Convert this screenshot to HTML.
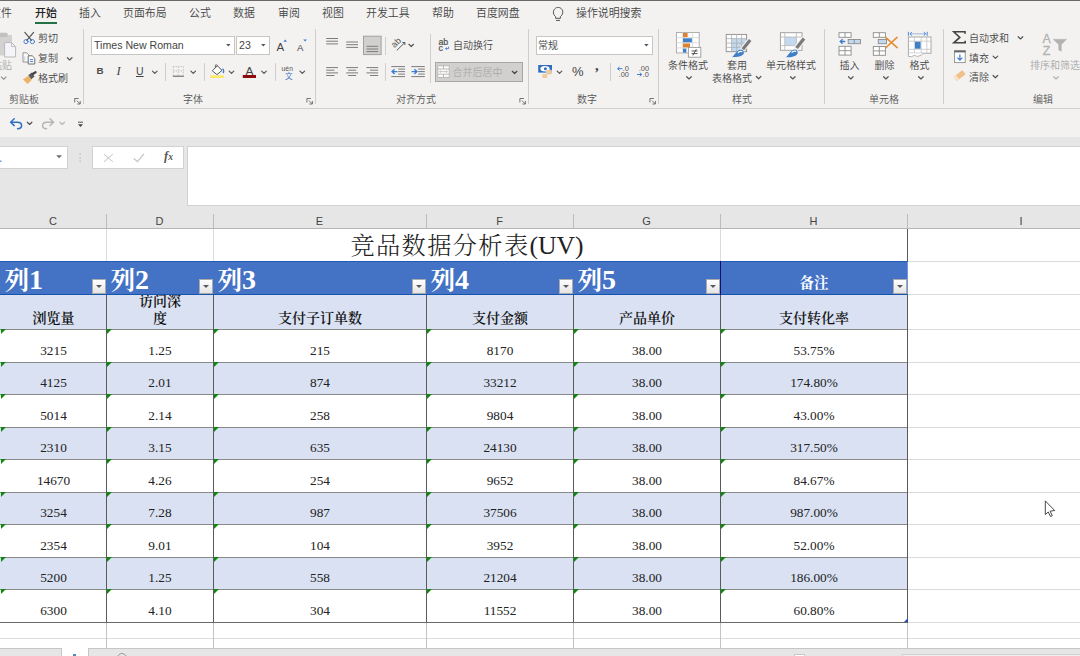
<!DOCTYPE html>
<html lang="zh-CN">
<head>
<meta charset="utf-8">
<title>竞品数据分析表(UV)</title>
<style>
*{box-sizing:border-box;margin:0;padding:0}
html,body{width:1080px;height:656px;overflow:hidden;background:#fff}
body{position:relative;font-family:"Liberation Sans","Noto Sans CJK SC",sans-serif;font-size:11px;color:#3b3b3b;font-weight:350}
.abs{position:absolute}
#topline{position:absolute;left:0;top:0;width:1080px;height:1px;background:#6a6a6a}
#ribbon{position:absolute;left:0;top:1px;width:1080px;height:107px;background:#f3f2f1}
#ribline{position:absolute;left:0;top:108px;width:1080px;height:1px;background:#d2d0ce}
#qat{position:absolute;left:0;top:109px;width:1080px;height:28px;background:#f3f2f1}
#fbar{position:absolute;left:0;top:137px;width:1080px;height:92px;background:#e6e6e6}
.tab{position:absolute;top:4px;height:16px;line-height:16px;font-size:10.9px;color:#444;white-space:nowrap}
.t{position:absolute;white-space:nowrap;font-size:10px;line-height:12px;color:#444}
.vsep{position:absolute;width:1px;background:#d0cecc;top:28px;height:75px}
.vsep.s{top:62px;height:18px}
.t.ctr{transform:translateX(-50%)}
.t.dis{color:#a8a8a8}
.t.dis2{color:#ababab}
.t.lat{font-family:'Liberation Sans',sans-serif}
.glabel{position:absolute;top:92.6px;font-size:10px;line-height:12px;color:#555;white-space:nowrap;transform:translateX(-50%)}
.box{position:absolute;background:#fff;border:1px solid #c8c6c4}
#botbar{position:absolute;left:0;top:648px;width:1080px;height:8px;overflow:hidden}
/* grid */
#colhdr{position:absolute;left:0;top:213px;width:1080px;height:16px;background:#e6e6e6;border-bottom:1px solid #b5b5b5}
.ch{position:absolute;top:214px;height:15px;line-height:15px;font-size:11px;color:#444;text-align:center}
.chs{position:absolute;top:214px;width:1px;height:15px;background:#bcbcbc}
#grid{position:absolute;left:0;top:0;width:1080px;height:656px;font-family:"Liberation Serif","Noto Serif CJK SC",serif}
.row{position:absolute;left:0;width:907px;background:#fff;border-top:1px solid #8a8a8a}
.row.band{background:#d9e1f2}
.c{position:absolute;top:-1px;bottom:0;border-left:1px solid #5a5a5a;text-align:center;font-size:13.3px;color:#222}
.c span{position:absolute;left:0;right:0;bottom:4px;line-height:15px}
.tri{position:absolute;left:0;top:0.4px;width:0;height:0;border-top:5.6px solid #0f870f;border-right:5.6px solid transparent}
.hl{position:absolute;height:1px;background:#dbdbdb}
.vl{position:absolute;width:1px;background:#dbdbdb}
</style>
<style>
#title{position:absolute;left:214px;width:506px;top:229px;height:32px;background:#fff;line-height:33px;text-align:center;font-size:25.6px;color:#222;white-space:nowrap}
#hrow{position:absolute;left:0;top:261px;width:907px;height:34px;background:#4472c4;border-top:1px solid #1f5cb8;border-bottom:1px solid #1553ac}
.hc{position:absolute;top:-1px;height:34px;color:#fff;font-weight:bold;font-size:24.5px;white-space:nowrap}
.hc span b{font-size:28px;font-weight:bold}
.hc span{position:absolute;left:4.5px;bottom:-0.6px;line-height:30px}
.hc.note{border-left:1px solid #10106a}
.hc.note span{left:0;right:0;text-align:center;font-size:14.5px;line-height:16px;bottom:4px}
.fb{position:absolute;right:0px;bottom:1px;width:14px;height:15px;background:linear-gradient(#fff,#e4e4e4);border:1px solid #ababab}
.fb b{position:absolute;left:3px;top:5px;width:0;height:0;border-left:3.5px solid transparent;border-right:3.5px solid transparent;border-top:3.5px solid #5a5a5a}
#srow{position:absolute;left:0;top:295px;width:907px;height:34px;background:#d9e1f2;overflow:hidden}
.sc{position:absolute;top:0;height:34px;border-left:1px solid #5a5a5a;font-weight:600;font-size:14px;color:#111;text-align:center;overflow:hidden}
.sc span{position:absolute;left:0;right:0;bottom:1.6px;line-height:17.2px}
#tblb{position:absolute;left:0;top:622px;width:908px;height:1px;background:#6a6a6a}
#tblr{position:absolute;left:907px;top:229px;width:1px;height:394px;background:#5a5a5a}
.c.f,.sc.f{border-left-color:transparent}
#hdl{position:absolute;left:904px;top:618px;width:0;height:0;border-bottom:4px solid #1f4fb4;border-left:4px solid transparent}
#tblrh{position:absolute;left:907px;top:262px;width:1px;height:32px;background:#6f97dd}
#title span{font-size:24.2px;letter-spacing:1.4px}
</style>
</head>
<body>
<div id="topline"></div>
<div id="ribbon">
<!-- tabs -->
<div class="tab" style="left:-10px">文件</div>
<div class="tab" style="left:35px;color:#222;font-weight:500">开始</div>
<div class="abs" style="left:35px;top:20.5px;width:22px;height:2px;background:#217346"></div>
<div class="tab" style="left:79px">插入</div>
<div class="tab" style="left:123px">页面布局</div>
<div class="tab" style="left:189px">公式</div>
<div class="tab" style="left:233px">数据</div>
<div class="tab" style="left:278px">审阅</div>
<div class="tab" style="left:322px">视图</div>
<div class="tab" style="left:366px">开发工具</div>
<div class="tab" style="left:432px">帮助</div>
<div class="tab" style="left:476px">百度网盘</div>
<div class="tab" style="left:576px">操作说明搜索</div>
<!-- group separators -->
<div class="vsep" style="left:83px"></div>
<div class="vsep" style="left:315px"></div>
<div class="vsep" style="left:528px"></div>
<div class="vsep" style="left:658px"></div>
<div class="vsep" style="left:824px"></div>
<div class="vsep" style="left:943px"></div>
<div class="vsep" style="left:430px;top:33px;height:49px"></div>
<!-- small separators -->
<div class="vsep s" style="left:165px"></div>
<div class="vsep s" style="left:204px"></div>
<div class="vsep s" style="left:275px"></div>
<div class="vsep s" style="left:385px"></div>
<div class="vsep s" style="left:385px;top:36px"></div>
<div class="vsep s" style="left:610px"></div>
<!-- group labels -->
<div class="glabel" style="left:24px">剪贴板</div>
<div class="glabel" style="left:193px">字体</div>
<div class="glabel" style="left:416px">对齐方式</div>
<div class="glabel" style="left:587px">数字</div>
<div class="glabel" style="left:742px">样式</div>
<div class="glabel" style="left:884px">单元格</div>
<div class="glabel" style="left:1043px">编辑</div>
<!-- clipboard texts -->
<div class="t dis" style="left:-8px;top:59.4px">粘贴</div>
<div class="t" style="left:38px;top:32px">剪切</div>
<div class="t" style="left:38px;top:52px">复制</div>
<div class="t" style="left:38px;top:72px">格式刷</div>
<!-- font group -->
<div class="box" style="left:91px;top:35px;width:144px;height:19px"></div>
<div class="t lat" style="left:94px;top:38px;font-size:10.6px">Times New Roman</div>
<div class="box" style="left:236px;top:35px;width:34px;height:19px"></div>
<div class="t lat" style="left:239px;top:38px;font-size:10.6px">23</div>
<div class="t lat" style="left:96.5px;top:64.4px;font-weight:bold;font-size:9.8px;color:#4a4a4a">B</div>
<div class="t" style="left:116.5px;top:63.6px;font-style:italic;font-size:12.5px;font-weight:400;font-family:'Liberation Serif',serif">I</div>
<div class="t lat" style="left:136px;top:64px;font-size:10.5px;text-decoration:underline">U</div>
<div class="t lat" style="left:276.4px;top:39.6px;font-size:11.5px">A</div>
<div class="t lat" style="left:297px;top:40.7px;font-size:9.6px">A</div>
<div class="t lat" style="left:245.4px;top:64.2px;font-size:11.8px">A</div>
<div class="t" style="left:285px;top:69.5px;font-size:7.6px;color:#2f6fc2">文</div>
<!-- alignment -->
<div class="t" style="left:453px;top:39px">自动换行</div>
<div class="box" style="left:435px;top:61px;width:88px;height:20px;background:#d2d0ce;border-color:#a8a6a4"></div>
<div class="t dis2" style="left:452.5px;top:65.5px">合并后居中</div>
<!-- number -->
<div class="box" style="left:536px;top:35px;width:117px;height:19px"></div>
<div class="t" style="left:538px;top:39px">常规</div>
<div class="t lat" style="left:572px;top:65px;font-size:13px">%</div>
<div class="t" style="left:595px;top:58px;font-size:15px;font-weight:bold;font-family:'Liberation Serif',serif">,</div>
<!-- styles -->
<div class="t ctr" style="left:688px;top:59px">条件格式</div>
<div class="t ctr" style="left:737px;top:59px">套用</div>
<div class="t ctr" style="left:732px;top:72px">表格格式</div>
<div class="t ctr" style="left:791px;top:59px">单元格样式</div>
<!-- cells -->
<div class="t ctr" style="left:849.5px;top:59px">插入</div>
<div class="t ctr" style="left:884.5px;top:59px">删除</div>
<div class="t ctr" style="left:919.5px;top:59px">格式</div>
<!-- editing -->
<div class="t" style="left:969px;top:31.8px">自动求和</div>
<div class="t" style="left:969px;top:51.5px">填充</div>
<div class="t" style="left:969px;top:70.6px">清除</div>
<div class="t dis" style="left:1030px;top:59px">排序和筛选</div>
</div>
<div id="ribline"></div>
<div id="qat"></div>
<div id="fbar">
<div class="box nb" style="left:-1px;top:9px;width:69px;height:23px;border-color:#d2d2d2"></div>
<div class="box nb" style="left:92px;top:9px;width:92px;height:23px;border-color:#d2d2d2"></div>
<div class="box nb" style="left:187px;top:9px;width:900px;height:60px;border-color:#d2d2d2"></div>
<div class="t" style="left:164px;top:13px;font-family:'Liberation Serif',serif;font-style:italic;font-weight:bold;font-size:12.5px;color:#555"><i>f</i><span style="font-size:9.5px">x</span></div>
</div>
<svg id="ico" class="abs" style="left:0;top:0" width="1080" height="212" viewBox="0 0 1080 212" font-family="'Liberation Sans',sans-serif">
<defs>
<path id="chv" d="M-2.3 -1.1 L0 1.15 L2.3 -1.1" fill="none" stroke-width="1.2" stroke-linecap="round" stroke-linejoin="round"/>
<path id="dl" d="M0 0.5 H-0.1 M0.5 0.5 H4.5 M0.5 0.5 V4.5 M2.6 2.6 L6 6 M6 3 V6 H3" fill="none" stroke="#666" stroke-width="0.9"/>
<path id="dd" d="M-2.2 -1.1 H2.2 L0 1.3 Z"/>
</defs>
<!-- lightbulb -->
<g fill="none" stroke="#555" stroke-width="1">
<path d="M555.6 16.6 C553.2 14.8 552.6 11.2 554.6 9 C556.6 6.8 560 6.9 561.8 9.2 C563.6 11.6 562.8 14.8 560.4 16.6 V18.3 H555.6 Z"/>
<path d="M556 20.4 H560"/>
</g>
<!-- paste (disabled) -->
<rect x="-2" y="35" width="14" height="20.5" fill="#d3d2d1"/>
<rect x="-1" y="32.8" width="8.6" height="4.2" rx="1" fill="#c2c1c0"/>
<path d="M4.6 42.6 H11.6 L15.6 46.6 V57 H4.6 Z" fill="#f4f4f9" stroke="#b9b9bd" stroke-width="1"/>
<path d="M11.6 42.6 V46.6 H15.6" fill="none" stroke="#b9b9bd" stroke-width="0.9"/>
<use href="#chv" x="3.7" y="78.1" stroke="#9a9a9a"/>
<!-- scissors -->
<g fill="none" stroke-linecap="round">
<path d="M24.8 32.4 L31.6 40.4 M33.6 32.4 L26.8 40.4" stroke="#555" stroke-width="1.2"/>
<circle cx="26" cy="41.6" r="2.1" stroke="#3b7bd2" stroke-width="0.9"/>
<circle cx="32.4" cy="41.6" r="2.1" stroke="#3b7bd2" stroke-width="0.9"/>
</g>
<!-- copy -->
<path d="M23 52.8 H26.6 L29.2 55.4 V62 H23 Z" fill="#fbfbfb" stroke="#8a8a8a" stroke-width="0.9"/>
<path d="M24.8 56.5 V60.5" stroke="#a8c4e8" stroke-width="0.8"/>
<path d="M28.2 55.8 H32.2 L34.8 58.4 V64 H28.2 Z" fill="#fff" stroke="#6e6e6e" stroke-width="1"/>
<path d="M29.8 59.6 H33.2 M29.8 61.6 H33.2" stroke="#3b7bd2" stroke-width="0.9"/>
<use href="#chv" x="69.7" y="58.8" stroke="#555"/>
<!-- format painter -->
<path d="M22.9 79.6 L28.6 75.4 L31.8 79.9 L27.6 83.9 Z" fill="#eab56b"/>
<path d="M28.4 75 L31.9 72.6 L34.6 76.5 L31.2 79.2 Z" fill="#5a5a5a"/>
<path d="M32.6 74 L35.6 72.2" stroke="#444" stroke-width="2.2" stroke-linecap="round"/>
<!-- dialog launchers -->
<use href="#dl" x="74.2" y="98"/>
<use href="#dl" x="306.4" y="98"/>
<use href="#dl" x="519.4" y="98"/>
<use href="#dl" x="649.4" y="98"/>
<!-- font box arrows -->
<use href="#dd" x="228.3" y="45.2" fill="#555"/>
<use href="#dd" x="263.3" y="45.2" fill="#555"/>
<use href="#dd" x="646.4" y="45.2" fill="#555"/>
<!-- grow/shrink font triangles -->
<path d="M283.4 41.8 L285.2 39.6 L287 41.8 Z" fill="#3b7bd2"/>
<path d="M303.2 39.4 H307 L305.1 41.6 Z" fill="#3b7bd2"/>
<!-- U chevron, border icon -->
<use href="#chv" x="154.8" y="72.2" stroke="#555"/>
<g stroke="#c2c2c2" stroke-width="1" stroke-dasharray="1.4 1.2" fill="none">
<path d="M173 66.5 H183.6 M173 71 H183.6 M173.3 66.5 V75.6 M178.3 66.5 V75.6 M183.3 66.5 V75.6"/>
</g>
<path d="M172.8 76.2 H183.8" stroke="#666" stroke-width="1.1"/>
<use href="#chv" x="193.2" y="72.2" stroke="#555"/>
<!-- fill bucket -->
<path d="M212.3 70.8 L217.4 65.8 L222 70.4 L216.9 74.6 Z" fill="#fff" stroke="#555" stroke-width="1" stroke-linejoin="round"/>
<path d="M215.4 67.6 V65.4 Q215.4 64.6 216.4 64.8 L218 66.2" fill="none" stroke="#555" stroke-width="0.9"/>
<path d="M222.6 68.6 Q224.6 71 223 73" fill="none" stroke="#3b7bd2" stroke-width="1.3"/>
<rect x="210.2" y="75.4" width="13.8" height="2.6" fill="#fbe869"/>
<use href="#chv" x="231.5" y="72.2" stroke="#555"/>
<!-- font color -->
<rect x="242.8" y="75" width="13.2" height="3" fill="#8f0a0a"/>
<use href="#chv" x="264" y="72.2" stroke="#555"/>
<!-- wen -->
<text x="281.6" y="70.8" font-size="6.8" fill="#555">uén</text>
<use href="#chv" x="302.3" y="72.2" stroke="#555"/>
<!-- alignment row 1 -->
<g stroke="#7c7c7c" stroke-width="1">
<path d="M326.2 38.5 H338 M326.2 41.2 H338 M326.2 43.9 H338"/>
<path d="M346.2 42 H358 M346.2 44.7 H358 M346.2 47.4 H358"/>
</g>
<rect x="363.5" y="36.2" width="17.6" height="18.4" fill="#d2d0ce" stroke="#a3a19f" stroke-width="1"/>
<path d="M366.5 46.3 H378.2 M366.5 49 H378.2 M366.5 51.6 H378.2" stroke="#7c7c7c" stroke-width="1"/>
<!-- orientation -->
<g transform="translate(394.6,48.2) rotate(-45)"><text x="0" y="0" font-size="9" fill="#555">ab</text></g>
<path d="M396.8 50.4 L404.8 42.6 M402.4 42.5 H404.9 V45" fill="none" stroke="#555" stroke-width="1"/>
<use href="#chv" x="411.2" y="45.4" stroke="#555"/>
<!-- wrap text icon -->
<text x="438.4" y="44.7" font-size="8.8" fill="#505050" stroke="#505050" stroke-width="0.2">ab</text>
<text x="438.4" y="50.8" font-size="8.8" fill="#505050" stroke="#505050" stroke-width="0.2">c</text>
<path d="M448.6 46.6 V48.6 H445.6 M446.8 47.4 L445.5 48.6 L446.8 49.8" fill="none" stroke="#3b7bd2" stroke-width="0.9"/>
<!-- alignment row 2 -->
<g stroke="#7c7c7c" stroke-width="1">
<path d="M326.2 67.6 H338 M326.2 70.2 H334.4 M326.2 72.9 H338 M326.2 75.5 H334.4"/>
<path d="M346.2 67.6 H358 M348.1 70.2 H356.2 M346.2 72.9 H358 M348.1 75.5 H356.2"/>
<path d="M366.4 67.6 H378.2 M370 70.2 H378.2 M366.4 72.9 H378.2 M370 75.5 H378.2"/>
<path d="M391.3 66.6 H405 M391.3 76.6 H405 M398.2 69.1 H405 M398.2 71.6 H405 M398.2 74.1 H405"/>
<path d="M411.3 66.6 H424.8 M411.3 76.6 H424.8 M418.2 69.1 H424.8 M418.2 71.6 H424.8 M418.2 74.1 H424.8"/>
</g>
<path d="M392 71.6 H397.4 M394.6 69.2 L392 71.6 L394.6 74" fill="none" stroke="#3b7bd2" stroke-width="1.3"/>
<path d="M411.6 71.6 H417 M414.4 69.2 L417 71.6 L414.4 74" fill="none" stroke="#3b7bd2" stroke-width="1.3"/>
<!-- merge icon -->
<g fill="#fcfcfc" stroke="#b4b4b4" stroke-width="0.9">
<rect x="437.8" y="65.8" width="11.4" height="11.6"/>
<path d="M437.8 69 H449.2 M437.8 74.2 H449.2 M443.5 65.8 V69 M443.5 74.2 V77.4" fill="none"/>
<path d="M439.6 71.6 H447.4 M440.8 70.5 L439.6 71.6 L440.8 72.7 M446.2 70.5 L447.4 71.6 L446.2 72.7" fill="none" stroke="#c0c0c0"/>
</g>
<use href="#chv" x="514.6" y="72.4" stroke="#444"/>
<!-- currency -->
<rect x="538.2" y="65" width="13.8" height="7.6" fill="#2f6fc2"/>
<ellipse cx="545" cy="68.8" rx="4.6" ry="2.7" fill="#fff"/>
<circle cx="545.4" cy="68.8" r="1.5" fill="#2f6fc2"/>
<g fill="#ecbd80" stroke="#f3f2f1" stroke-width="0.5">
<rect x="546.2" y="70" width="5.4" height="2.2" rx="1"/>
<rect x="546.2" y="72.2" width="5.4" height="2.2" rx="1"/>
<rect x="542" y="74" width="5.6" height="2.1" rx="1"/>
<rect x="542" y="76" width="5.6" height="2.1" rx="1"/>
</g>
<use href="#chv" x="559.5" y="72.2" stroke="#555"/>
<!-- decimals -->
<g font-size="7.4" fill="#555">
<text x="622.6" y="70.8">.0</text>
<text x="618.6" y="76.9">.00</text>
<text x="638.8" y="70.8">.00</text>
<text x="642.6" y="76.9">.0</text>
</g>
<path d="M617.6 68.7 H622.4 M619.6 66.9 L617.6 68.7 L619.6 70.5" fill="none" stroke="#3b7bd2" stroke-width="1"/>
<path d="M637 74.5 H641.8 M639.8 72.7 L641.8 74.5 L639.8 76.3" fill="none" stroke="#3b7bd2" stroke-width="1"/>
<!-- conditional formatting -->
<rect x="676.4" y="32.5" width="22.8" height="20.4" fill="#fff" stroke="#a6a6a6" stroke-width="0.9"/>
<path d="M682.8 32.5 V52.9 M692.6 32.5 V52.9 M676.4 37.6 H699.2 M676.4 42.8 H699.2 M676.4 47.9 H699.2" stroke="#d4d4d4" stroke-width="0.8" fill="none"/>
<rect x="683" y="33" width="4.6" height="4.1" fill="#e0812d"/>
<rect x="683" y="38.3" width="8.9" height="4" fill="#3f7fc8"/>
<rect x="683" y="43.5" width="7" height="3.9" fill="#e0812d"/>
<rect x="683" y="48.6" width="3.4" height="4" fill="#3f7fc8"/>
<rect x="688.4" y="47.4" width="12.4" height="9.8" fill="#fff" stroke="#9a9a9a" stroke-width="0.9"/>
<path d="M691.6 51 H697.6 M691.6 53.6 H697.6 M696.4 49.2 L692.8 55.4" stroke="#444" stroke-width="0.9" fill="none"/>
<use href="#chv" x="689" y="77.8" stroke="#555"/>
<!-- format as table -->
<rect x="726.2" y="34.4" width="20.4" height="17.3" fill="#fdfdfd"/>
<rect x="731.6" y="38.6" width="15" height="13" fill="#c3d9ef"/>
<rect x="726.2" y="34.4" width="20.4" height="17.3" fill="none" stroke="#8c8c8c" stroke-width="0.9"/>
<path d="M731.6 34.4 V51.7 M736.6 34.4 V51.7 M741.6 34.4 V51.7 M726.2 38.6 H746.6 M726.2 43.1 H746.6 M726.2 47.4 H746.6" stroke="#b0b0b0" stroke-width="0.8" fill="none"/>
<path d="M750.6 39.4 L741.6 50.6" stroke="#f3f2f1" stroke-width="5.4"/>
<path d="M750.2 40 L742.8 49.2" stroke="#7a7a7a" stroke-width="3.2" stroke-linecap="butt"/>
<path d="M732.2 57.2 C735 54.4 736.6 50.8 740.6 49.6 C743 49.6 744.4 51.4 743.8 53.6 C742.4 56.6 737.4 57.2 732.2 57.2 Z" fill="#3f7fc8"/>
<path d="M738.2 52.6 Q740 50.8 741.8 51.6" stroke="#fff" stroke-width="1.2" fill="none" stroke-linecap="round"/>
<use href="#chv" x="758.6" y="77.6" stroke="#555"/>
<!-- cell styles -->
<rect x="780.4" y="32.7" width="21.6" height="17.6" fill="#fdfdfd"/>
<rect x="784.8" y="37" width="11.6" height="8.6" fill="#c3d9ef"/>
<rect x="780.4" y="32.7" width="21.6" height="17.6" fill="none" stroke="#9a9a9a" stroke-width="0.9"/>
<path d="M784.8 32.7 V50.3 M796.4 32.7 V50.3 M780.4 37 H802 M780.4 45.6 H802" stroke="#b8b8b8" stroke-width="0.8" fill="none"/>
<path d="M804.4 38 L795.4 49.4" stroke="#f3f2f1" stroke-width="5.4"/>
<path d="M804 38.6 L796.6 48" stroke="#7a7a7a" stroke-width="3.2"/>
<path d="M786 57.2 C788.8 54.4 790.4 50.6 794.4 49.4 C796.8 49.4 798.2 51.2 797.6 53.4 C796.2 56.6 791.2 57.2 786 57.2 Z" fill="#3f7fc8"/>
<path d="M792 52.4 Q793.8 50.6 795.6 51.4" stroke="#fff" stroke-width="1.2" fill="none" stroke-linecap="round"/>
<use href="#chv" x="792.8" y="77.8" stroke="#555"/>
<!-- insert -->
<g fill="#fff" stroke="#8c8c8c" stroke-width="0.9">
<rect x="839" y="32.7" width="12.1" height="4.6"/><path d="M845 32.7 V37.3"/>
<rect x="839" y="46.3" width="12.1" height="8.8"/><path d="M845 46.3 V55.1 M839 50.7 H851.1"/>
<rect x="848.2" y="39.5" width="12.3" height="4.2" fill="#c3d9ef"/><path d="M854.3 39.5 V43.7"/>
</g>
<path d="M840.2 41.5 H845.2 M842.6 39.2 L840.2 41.5 L842.6 43.8" fill="none" stroke="#3b7bd2" stroke-width="1.3"/>
<use href="#chv" x="850.8" y="77.8" stroke="#555"/>
<!-- delete -->
<g fill="#fff" stroke="#8c8c8c" stroke-width="0.9">
<rect x="873.3" y="32.7" width="12.1" height="4.6"/><path d="M879.3 32.7 V37.3"/>
<rect x="873.3" y="46.5" width="12.1" height="8.8"/><path d="M879.3 46.5 V55.3 M873.3 50.9 H885.4"/>
<rect x="878.3" y="39.5" width="8.2" height="4.2" fill="#c3d9ef"/>
</g>
<path d="M885.6 37.4 L897.2 47.6 M897 37.4 L885.8 47.8" stroke="#e08c2e" stroke-width="1.5" fill="none" stroke-linecap="round"/>
<use href="#chv" x="885.9" y="77.8" stroke="#555"/>
<!-- format -->
<rect x="908.4" y="37" width="22.6" height="16.2" fill="#fff" stroke="#a0a0a0" stroke-width="0.9"/>
<path d="M914.4 37 V53.2 M921.2 37 V53.2 M926.8 37 V53.2 M908.4 41.2 H931 M908.4 49.3 H931" stroke="#c4c4c4" stroke-width="0.8" fill="none"/>
<rect x="915" y="41.7" width="5.6" height="7" fill="#3f7fc8"/>
<path d="M908.4 53.2 V56.4 Q911.5 57.4 914.4 55.4 Q917.5 57.6 921.2 55.2 L923.4 53.2" fill="#fff" stroke="#a0a0a0" stroke-width="0.8"/>
<path d="M908.4 31.8 V35.8 M927.2 31.8 V35.8" stroke="#3b7bd2" stroke-width="0.9"/>
<path d="M910 33.8 H925.6" stroke="#9ab4d8" stroke-width="0.9"/>
<path d="M911.8 32.2 L910 33.8 L911.8 35.4 M923.8 32.2 L925.6 33.8 L923.8 35.4" stroke="#3b7bd2" stroke-width="1" fill="none"/>
<use href="#chv" x="920.9" y="77.8" stroke="#555"/>
<!-- sigma -->
<path d="M965 33.8 V31.8 H953.8 L959.8 37.4 L953.8 42.8 H965.2 V40.8" fill="none" stroke="#444" stroke-width="1.6" stroke-linejoin="miter"/>
<use href="#chv" x="1020.5" y="37.8" stroke="#555"/>
<!-- fill -->
<rect x="954.6" y="51" width="10.6" height="11.6" fill="#fff" stroke="#8c8c8c" stroke-width="0.9"/>
<rect x="954.2" y="50.4" width="11.4" height="2" fill="#666"/>
<path d="M959.9 54.4 V60 M957.4 57.6 L959.9 60.2 L962.4 57.6" fill="none" stroke="#3b7bd2" stroke-width="1.2"/>
<use href="#chv" x="995.4" y="57.2" stroke="#555"/>
<!-- clear (eraser) -->
<g transform="translate(959.6,75.6) rotate(-38)">
<rect x="-5.6" y="-2.6" width="11.2" height="5.2" rx="0.8" fill="#f0c08a"/>
<rect x="-5.6" y="-2.6" width="3" height="5.2" rx="0.8" fill="#fbe3c4"/>
</g>
<use href="#chv" x="995.4" y="76.6" stroke="#555"/>
<!-- sort & filter (disabled) -->
<g fill="#b2b2b2" font-size="12.4" stroke="#b2b2b2" stroke-width="0.3">
<text x="1042.4" y="42.5">A</text>
<text x="1042.8" y="54.5">Z</text>
<path d="M1053 39.2 H1066.8 L1061.4 44.6 V51.4 L1058.6 50 V44.6 Z"/>
</g>
<use href="#chv" x="1056" y="77.8" stroke="#b0b0b0"/>
<!-- QAT -->
<path d="M11 122.2 H17.4 C20 122.2 21.6 123.8 21.6 125.6 C21.6 127.6 20 128.8 17.6 128.8 M14.2 118.8 L10.6 122.2 L14.2 125.6" fill="none" stroke="#2f6fc2" stroke-width="1.5" stroke-linecap="round" stroke-linejoin="round"/>
<use href="#chv" x="29.6" y="123.3" stroke="#555"/>
<path d="M53.2 122.2 H46.8 C44.2 122.2 42.6 123.8 42.6 125.6 C42.6 127.6 44.2 128.8 46.6 128.8 M50 118.8 L53.6 122.2 L50 125.6" fill="none" stroke="#b4b4b4" stroke-width="1.4" stroke-linecap="round" stroke-linejoin="round"/>
<use href="#chv" x="62.2" y="123.3" stroke="#b8b8b8"/>
<path d="M78 122.2 H83" stroke="#444" stroke-width="0.9"/>
<path d="M78 124.2 H83 L80.5 127 Z" fill="#444"/>
<rect x="0" y="160.6" width="1.6" height="1.2" fill="#5b86d6"/>
<!-- name box arrow, dots, fx icons -->
<path d="M56.2 155.3 H62 L59.1 158.3 Z" fill="#6a6a6a"/>
<g fill="#b0b0b0"><rect x="79.5" y="153.4" width="1.2" height="1.2"/><rect x="79.5" y="157.1" width="1.2" height="1.2"/><rect x="79.5" y="160.7" width="1.2" height="1.2"/></g>
<path d="M104 154.2 L112.8 161.8 M112.8 154.2 L104 161.8" stroke="#c4c4c4" stroke-width="1" fill="none"/>
<path d="M133.8 158.4 L137.4 161.6 L144 153.8" stroke="#c6c8c0" stroke-width="1.3" fill="none"/>
</svg>
<div id="colhdr"></div>
<div class="ch" style="left:0px;width:106px">C</div>
<div class="chs" style="left:106px"></div>
<div class="ch" style="left:106px;width:107px">D</div>
<div class="chs" style="left:213px"></div>
<div class="ch" style="left:213px;width:213px">E</div>
<div class="chs" style="left:426px"></div>
<div class="ch" style="left:426px;width:147px">F</div>
<div class="chs" style="left:573px"></div>
<div class="ch" style="left:573px;width:147px">G</div>
<div class="chs" style="left:720px"></div>
<div class="ch" style="left:720px;width:187px">H</div>
<div class="chs" style="left:907px"></div>
<div class="ch" style="left:961px;width:120px">I</div>
<div id="grid">
<div class="hl" style="left:907px;top:261px;width:173px"></div>
<div class="hl" style="left:907px;top:294px;width:173px"></div>
<div class="hl" style="left:907px;top:329px;width:173px"></div>
<div class="hl" style="left:907px;top:362px;width:173px"></div>
<div class="hl" style="left:907px;top:394px;width:173px"></div>
<div class="hl" style="left:907px;top:427px;width:173px"></div>
<div class="hl" style="left:907px;top:459px;width:173px"></div>
<div class="hl" style="left:907px;top:492px;width:173px"></div>
<div class="hl" style="left:907px;top:524px;width:173px"></div>
<div class="hl" style="left:907px;top:557px;width:173px"></div>
<div class="hl" style="left:907px;top:589px;width:173px"></div>
<div class="hl" style="left:907px;top:622px;width:173px"></div>
<div class="hl" style="left:907px;top:638px;width:173px"></div>
<div class="hl" style="left:0;top:638px;width:907px"></div>
<div class="vl" style="left:106px;top:229px;height:32px"></div>
<div class="vl" style="left:106px;top:623px;height:25px;background:#c4c4c4"></div>
<div class="vl" style="left:213px;top:229px;height:32px"></div>
<div class="vl" style="left:213px;top:623px;height:25px;background:#c4c4c4"></div>
<div class="vl" style="left:426px;top:229px;height:32px"></div>
<div class="vl" style="left:426px;top:623px;height:25px;background:#c4c4c4"></div>
<div class="vl" style="left:573px;top:229px;height:32px"></div>
<div class="vl" style="left:573px;top:623px;height:25px;background:#c4c4c4"></div>
<div class="vl" style="left:720px;top:229px;height:32px"></div>
<div class="vl" style="left:720px;top:623px;height:25px;background:#c4c4c4"></div>
<div class="vl" style="left:907px;top:229px;height:32px"></div>
<div class="vl" style="left:907px;top:623px;height:25px;background:#c4c4c4"></div>
<div id="title"><span>竞品数据分析表</span>(UV)</div>
<div id="hrow">
<div class="hc" style="left:0px;width:106px"><span>列<b>1</b></span><i class="fb"><b></b></i></div>
<div class="hc" style="left:106px;width:107px"><span>列<b>2</b></span><i class="fb"><b></b></i></div>
<div class="hc" style="left:213px;width:213px"><span>列<b>3</b></span><i class="fb"><b></b></i></div>
<div class="hc" style="left:426px;width:147px"><span>列<b>4</b></span><i class="fb"><b></b></i></div>
<div class="hc" style="left:573px;width:147px"><span>列<b>5</b></span><i class="fb"><b></b></i></div>
<div class="hc note" style="left:720px;width:187px"><span>备注</span><i class="fb"><b></b></i></div>
</div>
<div id="srow">
<div class="sc f" style="left:0px;width:106px"><span>浏览量</span></div>
<div class="sc" style="left:106px;width:107px"><span>访问深<br>度</span></div>
<div class="sc" style="left:213px;width:213px"><span>支付子订单数</span></div>
<div class="sc" style="left:426px;width:147px"><span>支付金额</span></div>
<div class="sc" style="left:573px;width:147px"><span>产品单价</span></div>
<div class="sc" style="left:720px;width:187px"><span>支付转化率</span></div>
</div>
<div class="row" style="top:329px;height:33px">
<div class="c f" style="left:0px;width:106px"><i class="tri"></i><span>3215</span></div>
<div class="c" style="left:106px;width:107px"><i class="tri"></i><span>1.25</span></div>
<div class="c" style="left:213px;width:213px"><i class="tri"></i><span>215</span></div>
<div class="c" style="left:426px;width:147px"><i class="tri"></i><span>8170</span></div>
<div class="c" style="left:573px;width:147px"><i class="tri"></i><span>38.00</span></div>
<div class="c" style="left:720px;width:187px"><i class="tri"></i><span>53.75%</span></div>
</div>
<div class="row band" style="top:362px;height:32px">
<div class="c f" style="left:0px;width:106px"><i class="tri"></i><span>4125</span></div>
<div class="c" style="left:106px;width:107px"><i class="tri"></i><span>2.01</span></div>
<div class="c" style="left:213px;width:213px"><i class="tri"></i><span>874</span></div>
<div class="c" style="left:426px;width:147px"><i class="tri"></i><span>33212</span></div>
<div class="c" style="left:573px;width:147px"><i class="tri"></i><span>38.00</span></div>
<div class="c" style="left:720px;width:187px"><i class="tri"></i><span>174.80%</span></div>
</div>
<div class="row" style="top:394px;height:33px">
<div class="c f" style="left:0px;width:106px"><i class="tri"></i><span>5014</span></div>
<div class="c" style="left:106px;width:107px"><i class="tri"></i><span>2.14</span></div>
<div class="c" style="left:213px;width:213px"><i class="tri"></i><span>258</span></div>
<div class="c" style="left:426px;width:147px"><i class="tri"></i><span>9804</span></div>
<div class="c" style="left:573px;width:147px"><i class="tri"></i><span>38.00</span></div>
<div class="c" style="left:720px;width:187px"><i class="tri"></i><span>43.00%</span></div>
</div>
<div class="row band" style="top:427px;height:32px">
<div class="c f" style="left:0px;width:106px"><i class="tri"></i><span>2310</span></div>
<div class="c" style="left:106px;width:107px"><i class="tri"></i><span>3.15</span></div>
<div class="c" style="left:213px;width:213px"><i class="tri"></i><span>635</span></div>
<div class="c" style="left:426px;width:147px"><i class="tri"></i><span>24130</span></div>
<div class="c" style="left:573px;width:147px"><i class="tri"></i><span>38.00</span></div>
<div class="c" style="left:720px;width:187px"><i class="tri"></i><span>317.50%</span></div>
</div>
<div class="row" style="top:459px;height:33px">
<div class="c f" style="left:0px;width:106px"><i class="tri"></i><span>14670</span></div>
<div class="c" style="left:106px;width:107px"><i class="tri"></i><span>4.26</span></div>
<div class="c" style="left:213px;width:213px"><i class="tri"></i><span>254</span></div>
<div class="c" style="left:426px;width:147px"><i class="tri"></i><span>9652</span></div>
<div class="c" style="left:573px;width:147px"><i class="tri"></i><span>38.00</span></div>
<div class="c" style="left:720px;width:187px"><i class="tri"></i><span>84.67%</span></div>
</div>
<div class="row band" style="top:492px;height:32px">
<div class="c f" style="left:0px;width:106px"><i class="tri"></i><span>3254</span></div>
<div class="c" style="left:106px;width:107px"><i class="tri"></i><span>7.28</span></div>
<div class="c" style="left:213px;width:213px"><i class="tri"></i><span>987</span></div>
<div class="c" style="left:426px;width:147px"><i class="tri"></i><span>37506</span></div>
<div class="c" style="left:573px;width:147px"><i class="tri"></i><span>38.00</span></div>
<div class="c" style="left:720px;width:187px"><i class="tri"></i><span>987.00%</span></div>
</div>
<div class="row" style="top:524px;height:33px">
<div class="c f" style="left:0px;width:106px"><i class="tri"></i><span>2354</span></div>
<div class="c" style="left:106px;width:107px"><i class="tri"></i><span>9.01</span></div>
<div class="c" style="left:213px;width:213px"><i class="tri"></i><span>104</span></div>
<div class="c" style="left:426px;width:147px"><i class="tri"></i><span>3952</span></div>
<div class="c" style="left:573px;width:147px"><i class="tri"></i><span>38.00</span></div>
<div class="c" style="left:720px;width:187px"><i class="tri"></i><span>52.00%</span></div>
</div>
<div class="row band" style="top:557px;height:32px">
<div class="c f" style="left:0px;width:106px"><i class="tri"></i><span>5200</span></div>
<div class="c" style="left:106px;width:107px"><i class="tri"></i><span>1.25</span></div>
<div class="c" style="left:213px;width:213px"><i class="tri"></i><span>558</span></div>
<div class="c" style="left:426px;width:147px"><i class="tri"></i><span>21204</span></div>
<div class="c" style="left:573px;width:147px"><i class="tri"></i><span>38.00</span></div>
<div class="c" style="left:720px;width:187px"><i class="tri"></i><span>186.00%</span></div>
</div>
<div class="row" style="top:589px;height:33px">
<div class="c f" style="left:0px;width:106px"><i class="tri"></i><span>6300</span></div>
<div class="c" style="left:106px;width:107px"><i class="tri"></i><span>4.10</span></div>
<div class="c" style="left:213px;width:213px"><i class="tri"></i><span>304</span></div>
<div class="c" style="left:426px;width:147px"><i class="tri"></i><span>11552</span></div>
<div class="c" style="left:573px;width:147px"><i class="tri"></i><span>38.00</span></div>
<div class="c" style="left:720px;width:187px"><i class="tri"></i><span>60.80%</span></div>
</div>
<div id="tblb"></div><div id="tblr"></div><div id="hdl"></div><div id="tblrh"></div>
</div>
<div id="botbar">
<div class="abs" style="left:0;top:0;width:62px;height:8px;background:#e6e6e6;border-top:1px solid #c6c6c6;border-right:1px solid #c6c6c6"></div>
<div class="abs" style="left:88px;top:0;width:992px;height:8px;background:#e6e6e6;border-top:1px solid #c6c6c6;border-left:1px solid #c6c6c6"></div>
<div class="abs" style="left:73px;top:6px;width:3px;height:2px;background:#5a86b8"></div>
<div class="abs" style="left:117px;top:5px;width:10px;height:10px;border:1px solid #9a9a9a;border-radius:50%"></div>
<div class="abs" style="left:794px;top:6px;width:11px;height:4px;background:#fff;border:1px solid #c8c8c8"></div>
<div class="abs" style="left:902px;top:6px;width:178px;height:4px;background:#f1f1f1;border-top:1px solid #d0d0d0;border-left:1px solid #d0d0d0"></div>
</div>
<svg class="abs" style="left:1040px;top:498px" width="16" height="22" viewBox="0 0 16 22"><path d="M5.3 2.9 V16.6 L8.2 14 L10.5 18.5 L12.3 17.7 L10.1 13.2 L14.7 12.5 Z" fill="#fff" stroke="#333" stroke-width="0.9" stroke-linejoin="round"/></svg>
</body>
</html>
